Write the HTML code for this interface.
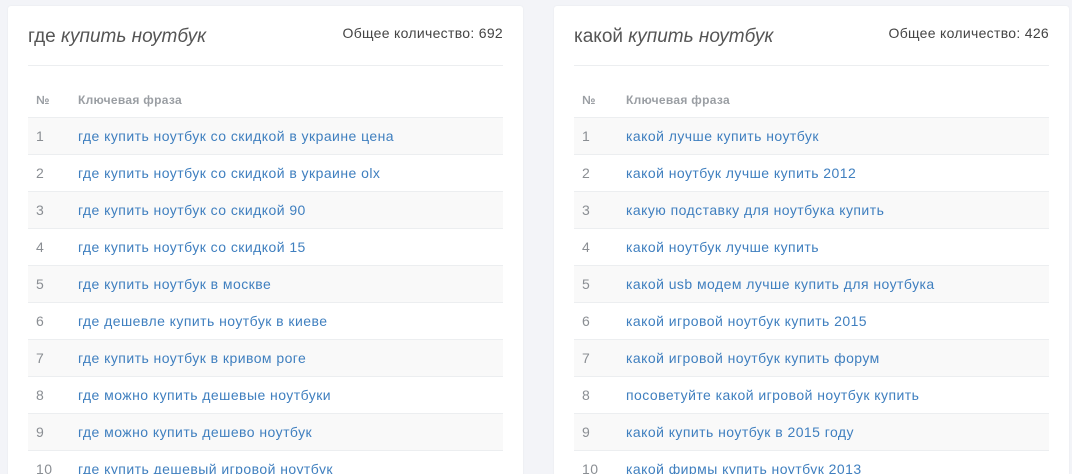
<!DOCTYPE html>
<html><head><meta charset="utf-8"><style>
html,body{margin:0;height:474px;overflow:hidden}
body{background:#f3f4f8;font-family:"Liberation Sans","DejaVu Sans",sans-serif;width:1072px;position:relative}
.card{position:absolute;top:6px;background:#fff;height:480px;border-radius:3px;box-shadow:0 0 2px rgba(0,0,0,.05)}
.in{position:absolute;left:20px;right:20px;top:0}
.t{position:absolute;top:20px;left:0;font-size:19px;color:#555;letter-spacing:0}
.t i{font-style:italic}
.c{position:absolute;top:19px;right:0;font-size:14px;color:#444;letter-spacing:0.3px}
.hr{position:absolute;top:59px;left:0;right:0;border-top:1px solid #eceef0}
.h{position:absolute;top:87px;left:0;font-size:12px;font-weight:bold;color:#9a9ea3;letter-spacing:0.3px}
.h span{position:absolute;white-space:nowrap}
.rows{position:absolute;top:111px;left:0;right:0}
.r{height:36px;border-top:1px solid #eceef0;position:relative;font-size:14px;color:#3f7fbf;letter-spacing:0.45px}
.r:nth-child(odd){background:#f9f9f9}
.r span{position:absolute;top:10px;white-space:nowrap}
.r .n{left:8px;color:#8a8e93}
.r .p{left:50px}
.R .r .p,.R .h .q{left:52px}
</style></head><body>
<div class="card" style="left:8px;width:515px"><div class="in">
<div class="t">где <i>купить ноутбук</i></div><div class="c">Общее количество: 692</div><div class="hr"></div>
<div class="h"><span style="left:8px">№</span><span style="left:50px">Ключевая фраза</span></div>
<div class="rows">
<div class="r"><span class="n">1</span><span class="p">где купить ноутбук со скидкой в украине цена</span></div>
<div class="r"><span class="n">2</span><span class="p">где купить ноутбук со скидкой в украине olx</span></div>
<div class="r"><span class="n">3</span><span class="p">где купить ноутбук со скидкой 90</span></div>
<div class="r"><span class="n">4</span><span class="p">где купить ноутбук со скидкой 15</span></div>
<div class="r"><span class="n">5</span><span class="p">где купить ноутбук в москве</span></div>
<div class="r"><span class="n">6</span><span class="p">где дешевле купить ноутбук в киеве</span></div>
<div class="r"><span class="n">7</span><span class="p">где купить ноутбук в кривом роге</span></div>
<div class="r"><span class="n">8</span><span class="p">где можно купить дешевые ноутбуки</span></div>
<div class="r"><span class="n">9</span><span class="p">где можно купить дешево ноутбук</span></div>
<div class="r"><span class="n">10</span><span class="p">где купить дешевый игровой ноутбук</span></div>
</div></div></div>
<div class="card R" style="left:554px;width:515px"><div class="in">
<div class="t">какой <i>купить ноутбук</i></div><div class="c">Общее количество: 426</div><div class="hr"></div>
<div class="h"><span style="left:8px">№</span><span class="q" style="left:52px">Ключевая фраза</span></div>
<div class="rows">
<div class="r"><span class="n">1</span><span class="p">какой лучше купить ноутбук</span></div>
<div class="r"><span class="n">2</span><span class="p">какой ноутбук лучше купить 2012</span></div>
<div class="r"><span class="n">3</span><span class="p">какую подставку для ноутбука купить</span></div>
<div class="r"><span class="n">4</span><span class="p">какой ноутбук лучше купить</span></div>
<div class="r"><span class="n">5</span><span class="p">какой usb модем лучше купить для ноутбука</span></div>
<div class="r"><span class="n">6</span><span class="p">какой игровой ноутбук купить 2015</span></div>
<div class="r"><span class="n">7</span><span class="p">какой игровой ноутбук купить форум</span></div>
<div class="r"><span class="n">8</span><span class="p">посоветуйте какой игровой ноутбук купить</span></div>
<div class="r"><span class="n">9</span><span class="p">какой купить ноутбук в 2015 году</span></div>
<div class="r"><span class="n">10</span><span class="p">какой фирмы купить ноутбук 2013</span></div>
</div></div></div>
</body></html>
